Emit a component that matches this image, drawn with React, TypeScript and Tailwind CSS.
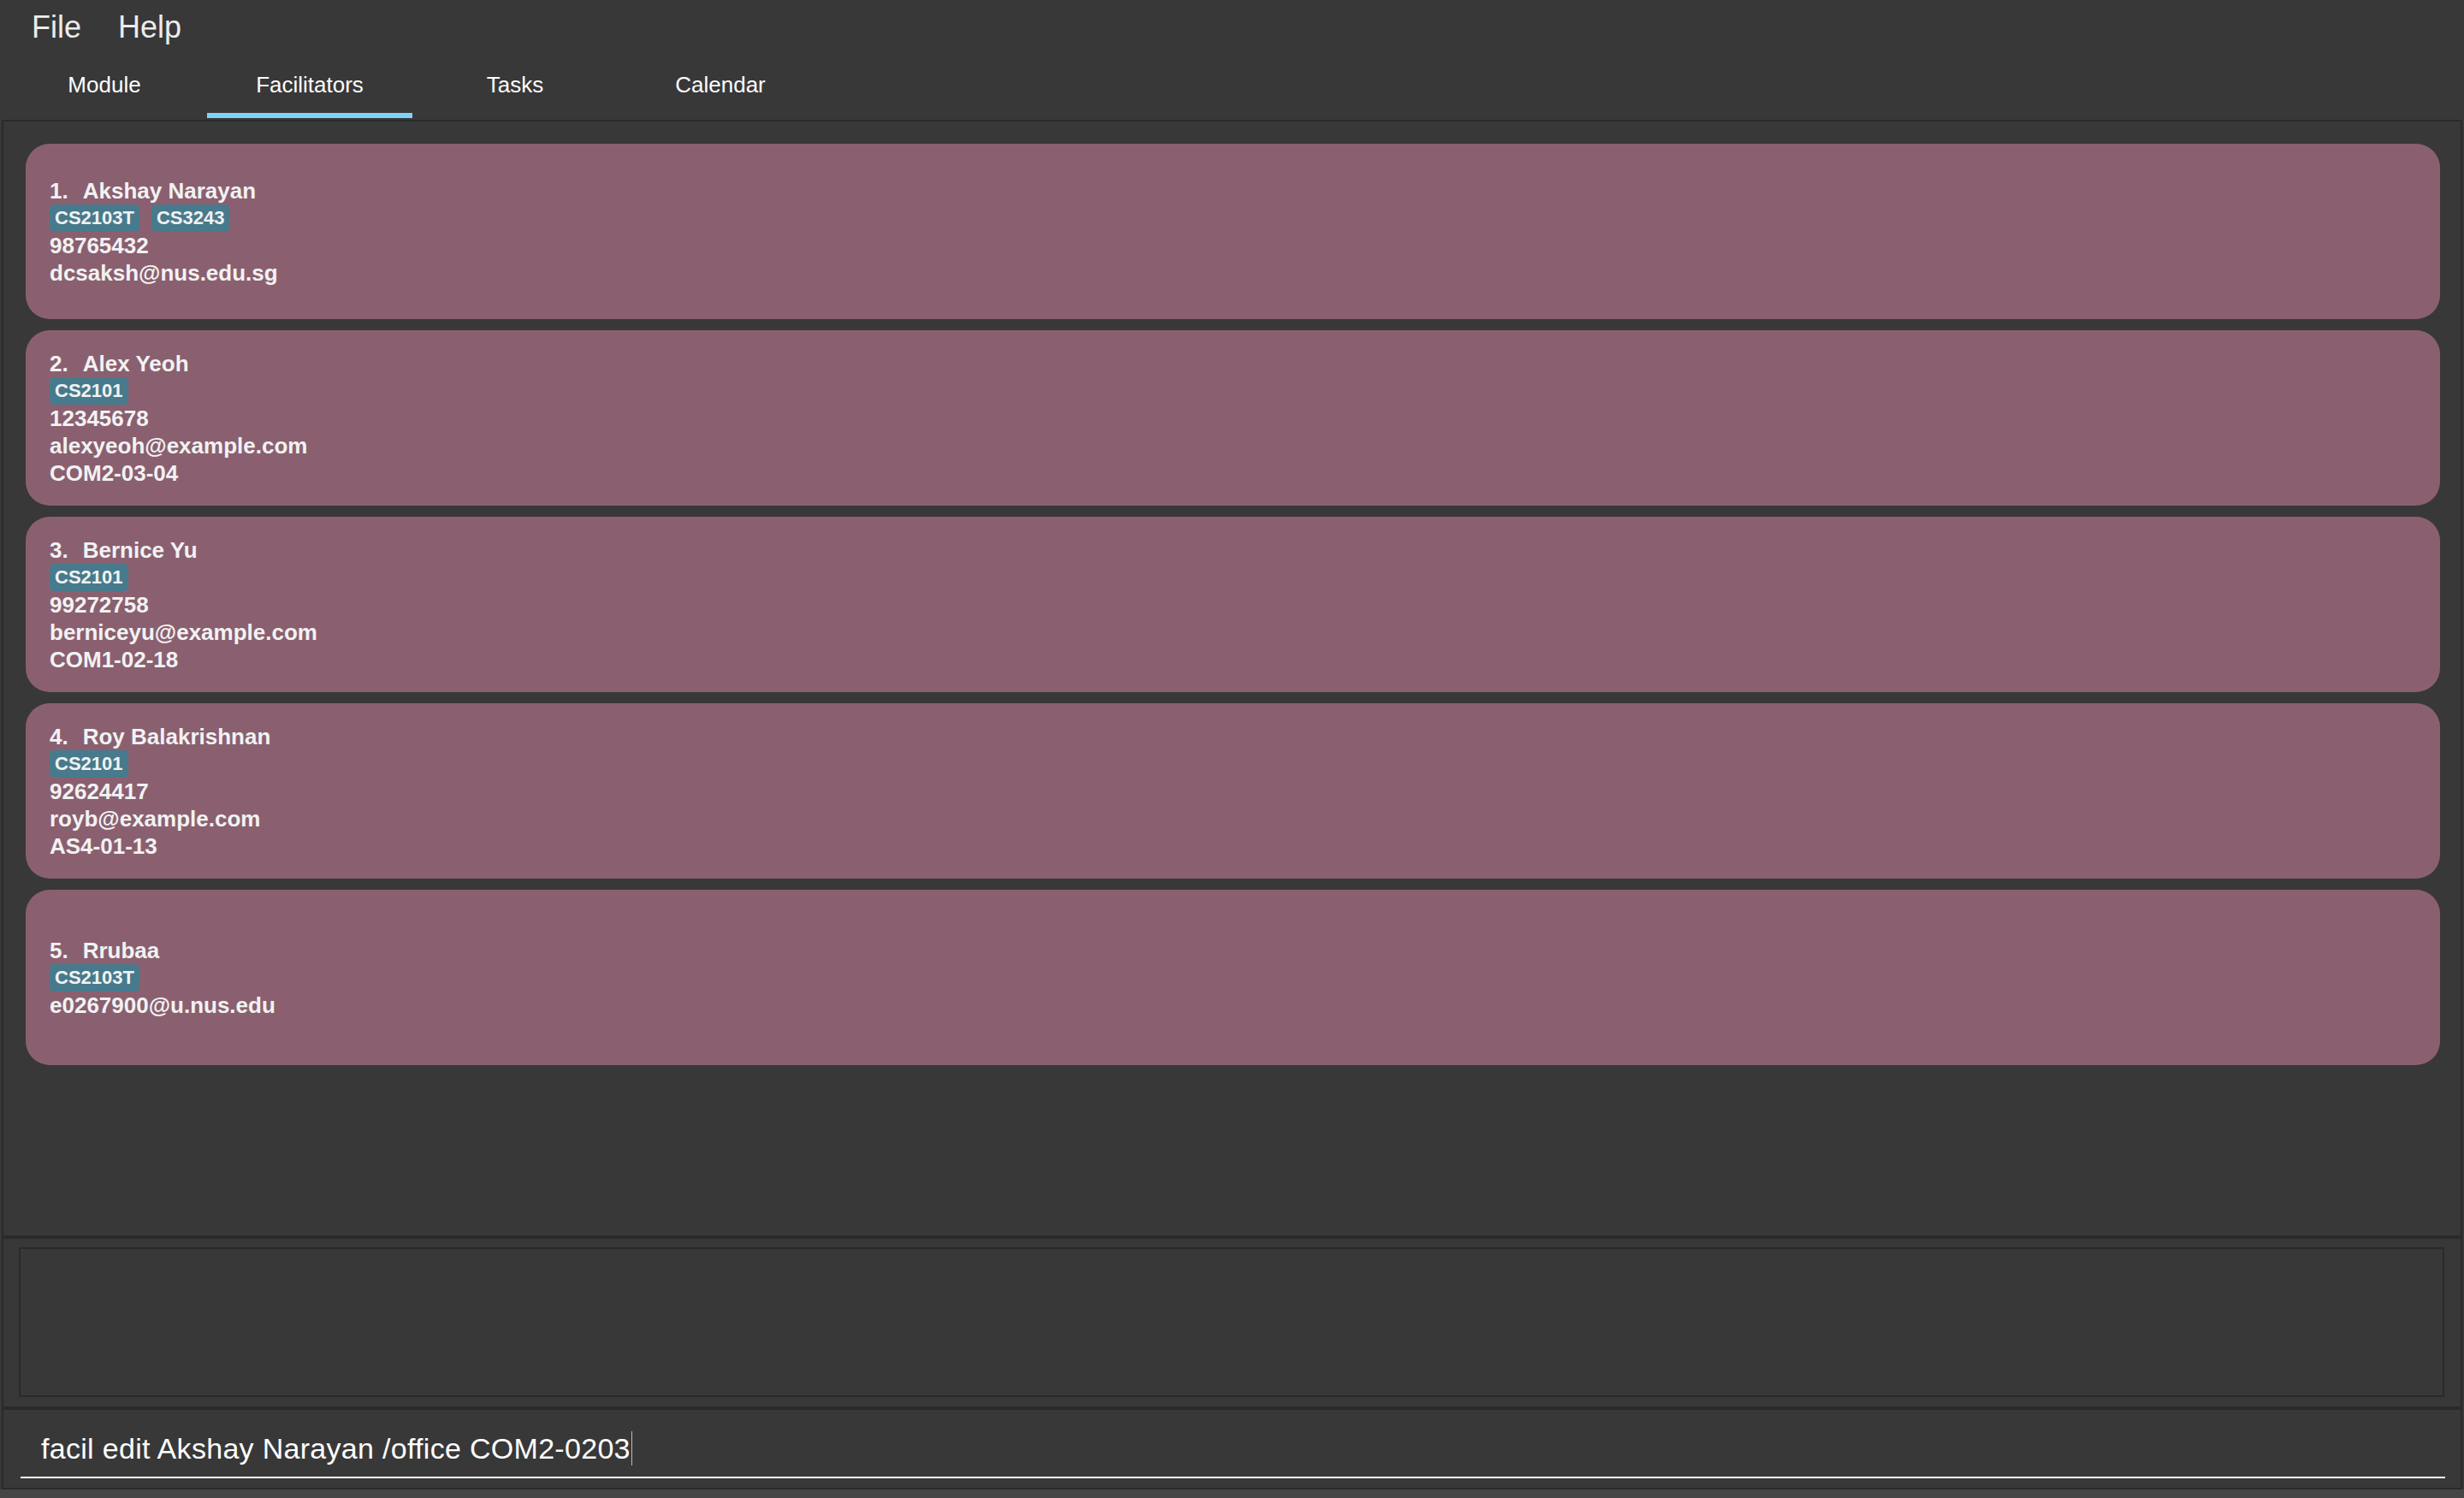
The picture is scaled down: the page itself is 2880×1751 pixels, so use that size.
import React from 'react'

const facilitators = [
  { name: 'Akshay Narayan', tags: ['CS2103T', 'CS3243'], lines: ['98765432', 'dcsaksh@nus.edu.sg'] },
  { name: 'Alex Yeoh', tags: ['CS2101'], lines: ['12345678', 'alexyeoh@example.com', 'COM2-03-04'] },
  { name: 'Bernice Yu', tags: ['CS2101'], lines: ['99272758', 'berniceyu@example.com', 'COM1-02-18'] },
  { name: 'Roy Balakrishnan', tags: ['CS2101'], lines: ['92624417', 'royb@example.com', 'AS4-01-13'] },
  { name: 'Rrubaa', tags: ['CS2103T'], lines: ['e0267900@u.nus.edu'] },
]

const tabs = ['Module', 'Facilitators', 'Tasks', 'Calendar']

function Card({ index, f }: { index: number; f: (typeof facilitators)[number] }) {
  return (
    <div className="h-[205px] shrink-0 rounded-[28px] bg-[#8a6070] pl-[28px] flex flex-col justify-center text-[#f2f2f2] font-bold text-[26px] leading-[32px]">
      <div className="flex gap-[17px]">
        <span>{index}.</span>
        <span>{f.name}</span>
      </div>
      <div className="flex gap-[14px] h-[32px]">
        {f.tags.map((t) => (
          <span key={t} className="h-[32px] px-[6px] rounded-[5px] bg-[#477a8c] text-[22px] leading-[32px]">
            {t}
          </span>
        ))}
      </div>
      {f.lines.map((l) => (
        <div key={l}>{l}</div>
      ))}
    </div>
  )
}

export default function App() {
  return (
    <div className="h-[1751px] w-full overflow-hidden flex flex-col bg-[#383838] font-['Liberation_Sans',Arial,sans-serif]">
      {/* menu bar */}
      <div className="h-[64px] shrink-0 flex gap-[43px] pl-[37px] pt-[14px] text-[36px] leading-[36px] text-[#ececec]">
        <span>File</span>
        <span>Help</span>
      </div>

      {/* tabs */}
      <div className="h-[76px] shrink-0 flex pl-[2px]">
        {tabs.map((t) => (
          <div
            key={t}
            className={
              t === 'Facilitators'
                ? 'w-[240px] h-[74px] flex justify-center pt-[19px] text-[26px] leading-[32px] text-white border-b-[6px] border-[#7fd3f8]'
                : 'w-[240px] h-[74px] flex justify-center pt-[19px] text-[26px] leading-[32px] text-white border-b-[6px] border-transparent'
            }
          >
            {t}
          </div>
        ))}
      </div>

      {/* list */}
      <div className="h-[1306px] shrink-0 mx-[2px] border-2 border-[#2a2a2a] pl-[26px] pr-[24px] pt-[26px] flex flex-col gap-[13px] overflow-hidden">
        {facilitators.map((f, i) => (
          <Card key={f.name} index={i + 1} f={f} />
        ))}
      </div>

      {/* result display */}
      <div className="h-[200px] shrink-0 mx-[2px] border-2 border-[#2a2a2a] pt-[10px] pb-[11px] pl-[18px] pr-[19px]">
        <div className="h-full border-2 border-[#2a2a2a]" />
      </div>

      {/* command box */}
      <div className="h-[95px] shrink-0 mx-[2px] border-2 border-[#2a2a2a] pl-[20px] pr-[18px]">
        <div className="h-[80px] border-b-2 border-white pl-[24px] pt-[25px] text-[34px] leading-[40px] tracking-[0.3px] text-white flex">
          <span>facil edit Akshay Narayan /office COM2-0203</span>
          <span className="w-[1px] h-[40px] bg-[#bbbbbb] ml-[1px]" />
        </div>
      </div>

      <div className="flex-1 bg-[#464646]" />
    </div>
  )
}
